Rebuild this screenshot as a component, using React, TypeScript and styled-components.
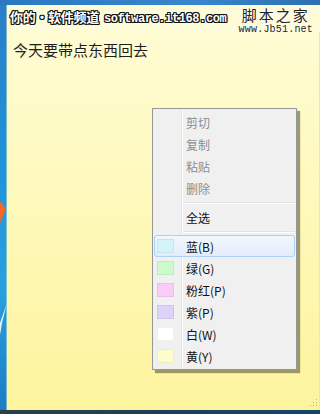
import React from 'react';
import styled, { createGlobalStyle } from 'styled-components';

const GlobalStyle = createGlobalStyle`
  html, body {
    margin: 0;
    padding: 0;
    width: 320px;
    height: 414px;
    overflow: hidden;
    background: #1d5f9e;
    font-family: "Noto Sans CJK SC", "Noto Sans", sans-serif;
  }
`;

const Screen = styled.div`
  width: 320px;
  height: 414px;
  display: flex;
  flex-direction: column;
  background: #1b4f7c;
`;

const TopStrip = styled.div`
  height: 5px;
  background: linear-gradient(90deg, #2a78c2, #3a86cc 60%, #2c6fb4);
`;

const Middle = styled.div`
  flex: 1;
  display: flex;
  min-height: 0;
`;

const Wallpaper = styled.div`
  width: 7px;
  flex-shrink: 0;
  background: linear-gradient(180deg, #2a7fc8 0%, #1f94d8 40%, #2aa0e0 70%, #1c7dc4 100%);
  svg {
    display: block;
  }
`;

const BottomStrip = styled.div`
  height: 4px;
  background: linear-gradient(90deg, #2b3f4a, #1f3d5a 50%, #14466e);
`;

const Note = styled.div`
  position: relative;
  flex: 1;
  display: flex;
  flex-direction: column;
  background: linear-gradient(180deg, #fffcd6 0%, #fef9bd 45%, #fdf49d 100%);
  box-shadow: inset -1px 0 0 #f0e7a0;
`;

const Header = styled.div`
  height: 27px;
  display: flex;
  align-items: flex-start;
  justify-content: space-between;
  padding: 0 7px 0 3px;
  background: #fefcd8;
`;

const Brand = styled.div`
  margin-top: 4px;
  display: flex;
  align-items: baseline;
  gap: 5px;
  color: #fff;
  font-weight: bold;
  font-size: 13px;
  line-height: 16px;
  text-shadow: 1px 0 0 #111, -1px 0 0 #111, 0 1px 0 #111, 0 -1px 0 #111,
    1px 1px 0 #111, -1px -1px 0 #111, 1px -1px 0 #111, -1px 1px 0 #111;
  letter-spacing: -0.3px;
`;

const BrandSite = styled.span`
  font-family: "Liberation Mono", "DejaVu Sans Mono", monospace;
  font-size: 12px;
  letter-spacing: -0.4px;
`;

const Mark = styled.div`
  display: flex;
  flex-direction: column;
  align-items: center;
  margin-top: 1px;
  color: #222;
  text-shadow: 0 0 2px #fff, 0 0 2px #fff;
`;

const MarkTitle = styled.div`
  font-size: 15px;
  line-height: 18px;
  letter-spacing: 2px;
`;

const MarkUrl = styled.div`
  font-family: "Liberation Mono", monospace;
  font-size: 10px;
  line-height: 11px;
  letter-spacing: 0.2px;
`;

const Body = styled.div`
  padding: 8px 0 0 6px;
  font-size: 15px;
  line-height: 20px;
  color: #1e1e1e;
`;

const Grip = styled.div`
  position: absolute;
  right: 3px;
  bottom: 4px;
  width: 8px;
  height: 8px;
  background-image: radial-gradient(circle, #b8b49a 0.8px, transparent 1px);
  background-size: 3px 3px;
  clip-path: polygon(100% 0, 100% 100%, 0 100%);
`;

const Menu = styled.div`
  position: absolute;
  left: 145px;
  top: 103px;
  width: 141px;
  padding: 2px 1px;
  background: linear-gradient(90deg, #f0f0f0 0, #f0f0f0 28px, #e2e3e3 28px, #e2e3e3 29px, #fff 29px, #fff 30px, #f0f0f0 30px);
  border: 1px solid #979797;
  box-shadow: 3px 3px 1px rgba(90, 88, 60, 0.6);
  font-size: 12px;
`;

const Item = styled.div<{ $disabled?: boolean; $active?: boolean }>`
  height: 22px;
  display: flex;
  align-items: center;
  box-sizing: border-box;
  color: ${(p) => (p.$disabled ? '#8d8d8d' : '#111')};
  border: 1px solid ${(p) => (p.$active ? '#aecff7' : 'transparent')};
  border-radius: 3px;
  background: ${(p) => (p.$active ? 'linear-gradient(180deg, #f2f7fd, #e1ecfb)' : 'transparent')};
`;

const Gutter = styled.div`
  width: 29px;
  flex-shrink: 0;
  display: flex;
  align-items: center;
  padding-left: 2px;
  box-sizing: border-box;
`;

const Swatch = styled.div<{ $color: string }>`
  width: 17px;
  height: 14px;
  background: ${(p) => p.$color};
  border: 1px solid rgba(0, 0, 0, 0.06);
  box-sizing: border-box;
`;

const Label = styled.span`
  padding-left: 2px;
`;

const Separator = styled.div`
  height: 7px;
  display: flex;
  align-items: center;
  padding-left: 30px;
  &::after {
    content: '';
    flex: 1;
    height: 1px;
    background: #e2e3e3;
    box-shadow: 0 1px 0 #fff;
  }
`;

const editItems = ['剪切', '复制', '粘贴', '删除'];

const colorItems = [
  { label: '蓝(B)', color: '#d4f3f9' },
  { label: '绿(G)', color: '#cbfbcb' },
  { label: '粉红(P)', color: '#f8ccf6' },
  { label: '紫(P)', color: '#ddd3f8' },
  { label: '白(W)', color: '#ffffff' },
  { label: '黄(Y)', color: '#fdfdcb' },
];

const App: React.FC = () => {
  return (
    <>
      <GlobalStyle />
      <Screen>
        <TopStrip />
        <Middle>
          <Wallpaper>
            <svg width="7" height="405" viewBox="0 0 7 405">
              <path d="M0 196 L6 204 L0 218 Z" fill="#f0682a" />
              <path d="M7 298 L2 318 L0 330 L0 318 Z" fill="#e8f4fb" />
              <path d="M7 0 L7 405" stroke="#d8e8c0" strokeWidth="1" />
            </svg>
          </Wallpaper>
          <Note>
            <Header>
              <Brand>
                <span>你的·软件频道</span>
                <BrandSite>software.it168.com</BrandSite>
              </Brand>
              <Mark>
                <MarkTitle>脚本之家</MarkTitle>
                <MarkUrl>www.Jb51.net</MarkUrl>
              </Mark>
            </Header>
            <Body>今天要带点东西回去</Body>
            <Grip />
            <Menu>
              {editItems.map((t) => (
                <Item key={t} $disabled>
                  <Gutter />
                  <Label>{t}</Label>
                </Item>
              ))}
              <Separator />
              <Item>
                <Gutter />
                <Label>全选</Label>
              </Item>
              <Separator />
              {colorItems.map((c, i) => (
                <Item key={c.label} $active={i === 0}>
                  <Gutter>
                    <Swatch $color={c.color} />
                  </Gutter>
                  <Label>{c.label}</Label>
                </Item>
              ))}
            </Menu>
          </Note>
        </Middle>
        <BottomStrip />
      </Screen>
    </>
  );
};

export default App;
